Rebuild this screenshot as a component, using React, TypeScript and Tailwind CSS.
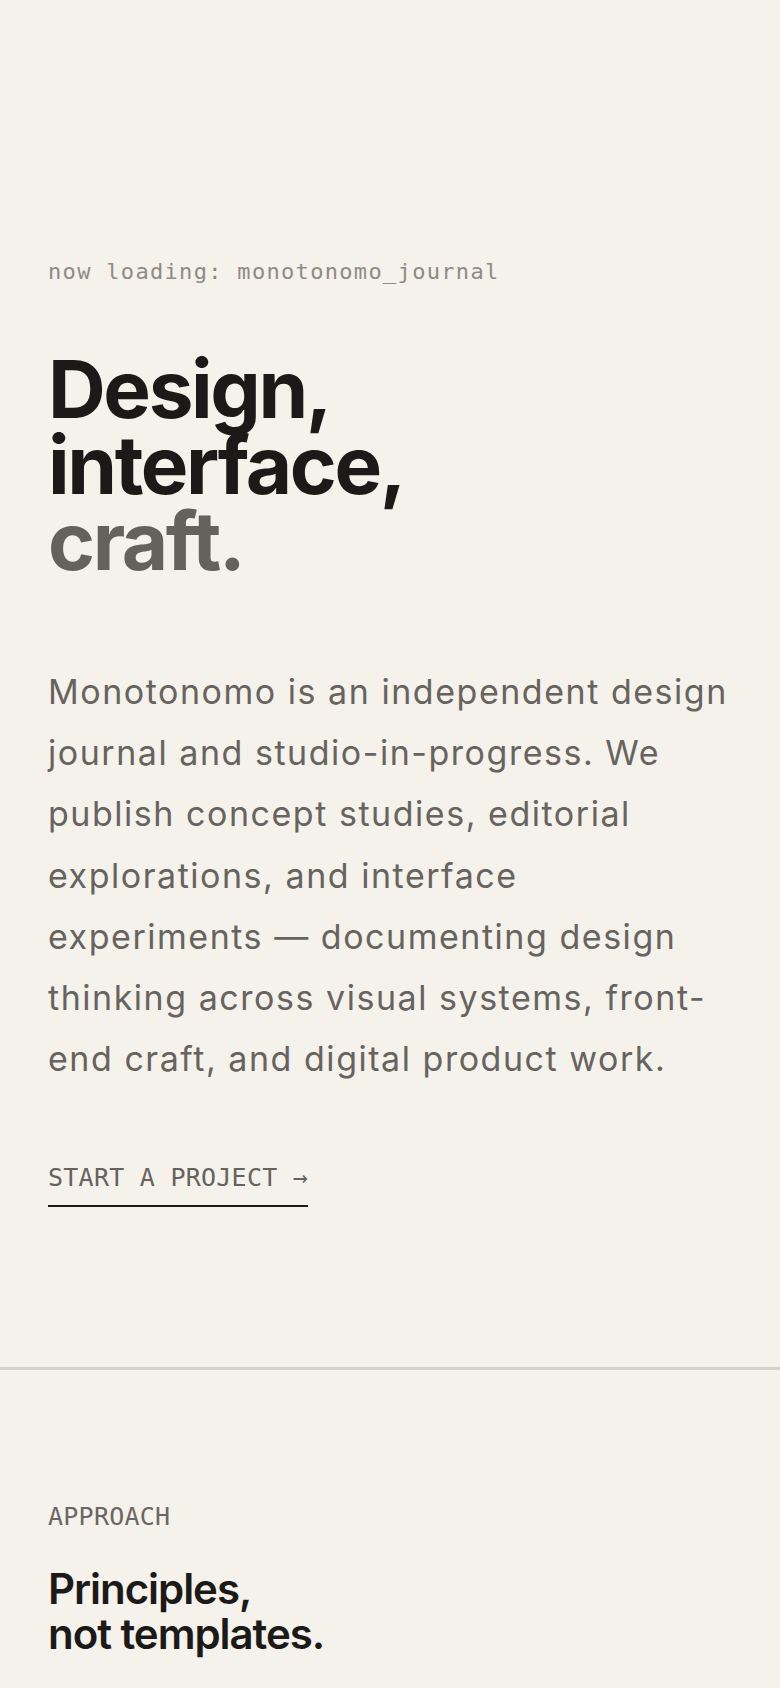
export default function App() {
  const mono = { fontFamily: '"DejaVu Sans Mono", "Liberation Mono", monospace' };
  const sans = { fontFamily: 'Inter, "Noto Sans", "Liberation Sans", sans-serif' };

  return (
    <div className="min-h-[1688px] w-full bg-[#f5f2ec] text-[#1b1a18]" style={sans}>
      {/* Hero */}
      <section className="px-12 pt-[255px] pb-[160px]">
        <p className="text-[22px] leading-[33px] tracking-[0.06em] text-[#8e8a85]" style={mono}>
          now loading: monotonomo_journal
        </p>

        <h1 className="mt-[63px] text-[80px] font-bold leading-[76px] tracking-[-0.03em] text-[#1b1a18]">
          Design,
          <br />
          interface,
          <br />
          <span className="text-[#65615c]">craft.</span>
        </h1>

        <p className="mt-[82px] text-[34px] leading-[1.8] tracking-[0.045em] text-[#67635e]">
          Monotonomo is an independent design
          <br />
          journal and studio-in-progress. We
          <br />
          publish concept studies, editorial
          <br />
          explorations, and interface
          <br />
          experiments — documenting design
          <br />
          thinking across visual systems, front-
          <br />
          end craft, and digital product work.
        </p>

        <a
          href="#"
          className="mt-[74px] inline-block border-b-2 border-[#1b1a18] pb-[12px] text-[25px] leading-[30px] tracking-[0.01em] text-[#66625d] uppercase"
          style={mono}
        >
          Start a project →
        </a>
      </section>

      {/* Approach */}
      <section className="border-t-[3px] border-[#d3d0c9] px-12 pt-[132px] pb-24">
        <p className="text-[25px] leading-[30px] tracking-[0.01em] text-[#6b6661] uppercase" style={mono}>
          Approach
        </p>
        <h2 className="mt-[34px] text-[42px] font-semibold leading-[45px] tracking-[-0.025em] text-[#1b1a18]">
          Principles,
          <br />
          not templates.
        </h2>
      </section>
    </div>
  );
}
